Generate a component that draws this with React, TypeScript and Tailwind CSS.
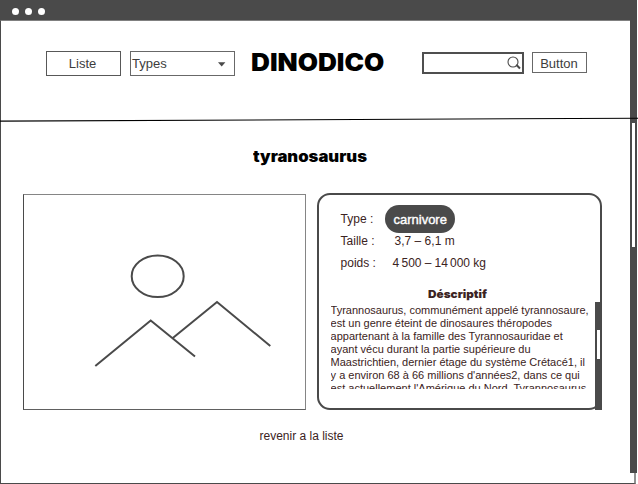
import React from "react";

const facts = [
  { label: "Taille :", value: "3,7 – 6,1 m", indent: "pl-[54px]" },
  { label: "poids :", value: "4\u2009500 – 14\u2009000 kg", indent: "pl-[52px] tracking-[-0.06px]" },
];

const heavy = "font-['Inter',sans-serif] font-black origin-left";

function Header() {
  return (
    <header className="flex h-[98px] shrink-0 items-start pl-[45px] text-[13px] text-[#3d3d3d]">
      <button className="mt-[30px] h-[25px] w-[75px] border border-[#585858] pr-[2px] leading-[23px]">Liste</button>
      <button className="mt-[30px] ml-[9px] flex h-[25px] w-[105px] items-center justify-between border border-[#686868] pl-px pr-2">
        <span>Types</span>
        <svg width="8" height="5" viewBox="0 0 8 5" className="mt-px">
          <path d="M0 .3h7.4L3.7 4.5Z" fill="#4a4a4a" />
        </svg>
      </button>
      <h1 className={`${heavy} mt-[29px] ml-[16px] w-[171px] scale-x-[1.09] whitespace-nowrap text-[24px] leading-[26px] text-black`}>DINODICO</h1>
      <div className="mt-[31px] flex h-[22px] w-[102px] items-center justify-end border-2 border-[#4f4f4f] pr-px">
        <svg width="14" height="14" viewBox="0 0 14 14" fill="none" stroke="#4a4a4a">
          <circle cx="6" cy="6" r="5" strokeWidth="1.1" />
          <path d="m9.3 8.7 3.7 3.8" strokeWidth="2" />
        </svg>
      </div>
      <button className="mt-[31px] ml-2 h-[21px] w-[55px] border border-[#686868] pr-px leading-[21px]">Button</button>
    </header>
  );
}

function Picture() {
  return (
    <div className="h-[216px] w-[283px] border border-t-[#858585] border-r-[#858585] border-b-[#606060] border-l-[#4a4a4a]">
      <svg width="281" height="214" viewBox="24 195 281 214" fill="none" stroke="#4a4a4a" strokeWidth="2">
        <ellipse cx="157.7" cy="276.2" rx="26" ry="20.8" />
        <path d="M95.3 366 150.7 320.5 195 356.5M172.8 338 217 302l53.3 44" />
      </svg>
    </div>
  );
}

function Details() {
  return (
    <section className="relative ml-[10.6px] h-[217px] w-[285.4px] rounded-[13px] border-2 border-[#4a4a4a] text-[12px] text-[#3b2322]">
      <div className="flex h-[39px] items-start pt-[10px] pl-[22px]">
        <span className="w-[44.6px] pt-[7px] leading-[14px]">Type :</span>
        <span className="h-[28px] w-[70px] rounded-[14px] bg-[#4a4a4a] text-center text-[13px] leading-[29px] text-white [-webkit-text-stroke:0.4px_white]">carnivore</span>
      </div>
      <dl>
        {facts.map((f) => (
          <div key={f.label} className="flex h-[22px] pl-[22px] leading-[14px]">
            <dt className="w-0 whitespace-nowrap">{f.label}</dt>
            <dd className={f.indent}>{f.value}</dd>
          </div>
        ))}
      </dl>
      <h3 className={`${heavy} mt-[10px] ml-[109px] w-[56px] scale-x-[1.07] text-[11px] leading-[13px]`}>Déscriptif</h3>
      <p className="mt-[3px] ml-[12px] h-[85px] overflow-hidden whitespace-nowrap text-[11px] leading-[13px]">
        Tyrannosaurus, communément appelé tyrannosaure,<br />
        est un genre éteint de dinosaures théropodes<br />
        appartenant à la famille des Tyrannosauridae et<br />
        ayant vécu durant la partie supérieure du<br />
        Maastrichtien, dernier étage du système Crétacé1, il<br />
        y a environ 68 à 66 millions d'années2, dans ce qui<br />
        est actuellement l'Amérique du Nord. Tyrannosaurus
      </p>
      <div className="absolute -right-[2px] -bottom-[2px] h-[108px] w-[7px] bg-[#4a4a4a] px-[2px] pt-[28px]">
        <div className="h-[29px] bg-white" />
      </div>
    </section>
  );
}

export default function App() {
  return (
    <div className="relative flex h-[484px] w-[638px] flex-col overflow-hidden bg-white font-['Liberation_Sans',Arial,sans-serif]">
      <div className="flex h-[20px] w-[637px] shrink-0 items-center gap-[6px] bg-[#4a4a4a] pt-[3px] pl-3">
        <i className="size-[7px] rounded-full bg-white" />
        <i className="size-[7px] rounded-full bg-white" />
        <i className="size-[7px] rounded-full bg-white" />
      </div>
      <div className="flex grow">
        <main className="flex w-[630px] flex-col border-t border-b border-l border-t-[#808080] border-b-[#4a4a4a] border-l-[#4a4a4a]">
          <Header />
          <h2 className={`${heavy} mt-[28px] ml-[252px] w-[110px] scale-x-[1.11] text-[15px] leading-[20px] text-black`}>tyranosaurus</h2>
          <div className="mt-[26px] flex items-start pl-[22px]">
            <div className="pt-px"><Picture /></div>
            <Details />
          </div>
          <a className="mt-[19px] pl-[258.5px] text-[12px] leading-[14px] text-[#3b2322]">revenir a la liste</a>
        </main>
        <aside className="flex w-[7px] flex-col">
          <div className="h-[453px] bg-[#4a4a4a] px-[2px] pt-[103px]">
            <div className="h-[124px] bg-white" />
          </div>
          <div className="h-[11px] w-[6px] border-r-2 border-b border-r-[#929292] border-b-[#4a4a4a]" />
        </aside>
      </div>
      <svg className="absolute top-[116px] left-0" width="638" height="7" viewBox="0 116 638 7">
        <path d="M0 121.1 638 118.2" stroke="#000" strokeWidth="1.1" />
      </svg>
    </div>
  );
}
